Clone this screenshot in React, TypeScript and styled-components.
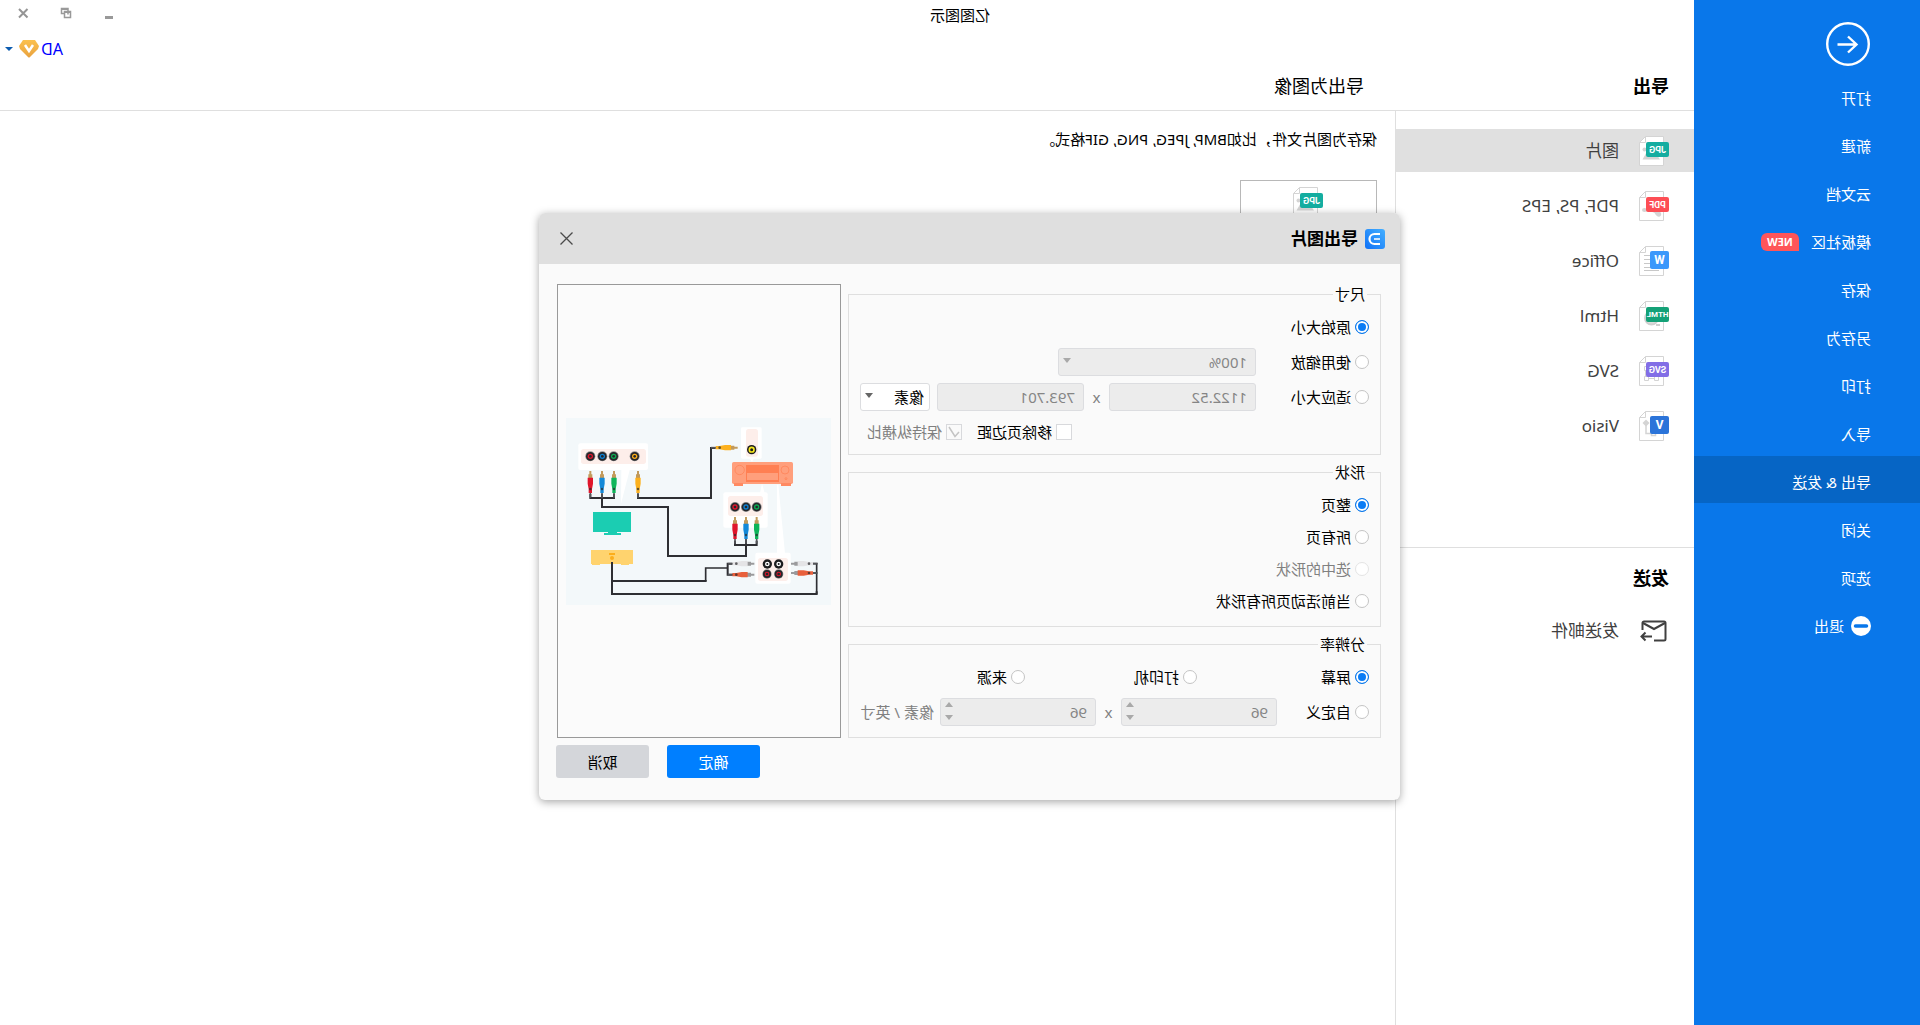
import React from "react";
import styled, { createGlobalStyle, css } from "styled-components";

const color = {
  brand: "#0977ea",
  brandActive: "#0665c5",
  line: "#dfdfdf",
  panel: "#fafafa",
  muted: "#808080",
  text: "#000000",
};

const GlobalStyle = createGlobalStyle`
  *, *::before, *::after { box-sizing: border-box; }
  body {
    margin: 0;
    background: #fff;
    overflow-x: hidden;
  }
  body, button, input, select {
    font-family: "Noto Sans", "Noto Sans CJK SC", sans-serif;
    font-size: 15px;
    line-height: 20px;
    color: ${color.text};
  }
  button { border: 0; padding: 0; background: none; cursor: pointer; }
  h1, h2, p, ul { margin: 0; padding: 0; font-weight: 400; }
  ul { list-style: none; }
  svg { display: block; flex: none; }
`;

/* The whole window is shown mirrored. */
const Window = styled.div`
  position: relative;
  display: flex;
  min-height: 100vh;
  background: #fff;
  transform: scaleX(-1);
`;

/* ---------- side menu ---------- */

const Side = styled.nav`
  flex: none;
  width: 226px;
  padding-top: 22px;
  background: ${color.brand};
`;

const BackButton = styled.button`
  display: block;
  margin: 0 0 6px 50px;
`;

const SideItem = styled.button<{ $active?: boolean }>`
  display: flex;
  align-items: center;
  width: 100%;
  height: 47px;
  margin-bottom: 1px;
  padding: 4px 0 0 49px;
  color: #fff;
  background: ${(p) => (p.$active ? color.brandActive : "transparent")};
`;

const NewBadge = styled.span`
  width: 38px;
  height: 18px;
  margin-left: 12px;
  border-radius: 6px 6px 6px 0;
  background: #ff5559;
  font-size: 11px;
  font-weight: 700;
  line-height: 18px;
  text-align: center;
`;

const ItemIcon = styled.span`
  margin-right: 7px;
`;

/* ---------- page frame ---------- */

const Content = styled.div`
  flex: 1;
  min-width: 0;
  display: flex;
  flex-direction: column;
`;

const TitleBar = styled.header`
  display: grid;
  grid-template-columns: 1fr 226px;
  height: 34px;
  align-items: center;
`;

const AppTitle = styled.h1`
  font-size: 15px;
  line-height: 20px;
  text-align: center;
  padding-bottom: 4px;
`;

const WindowButtons = styled.div`
  display: flex;
  justify-content: flex-end;
  padding: 0 2px 8px 0;
`;

const WindowButton = styled.button`
  display: flex;
  align-items: center;
  justify-content: center;
  width: 43px;
  height: 26px;
`;

const UserRow = styled.div`
  display: flex;
  justify-content: flex-end;
  align-items: center;
  gap: 2px;
  height: 29px;
  padding-right: 5px;
`;

const UserLink = styled.a`
  font-size: 16px;
  color: #0000ff;
  text-decoration: none;
`;

const CaretButton = styled.button`
  display: flex;
  align-items: center;
  padding-left: 4px;
  height: 20px;
`;

const Headings = styled.div`
  display: flex;
  align-items: center;
  height: 48px;
  padding-bottom: 2px;
  border-bottom: 1px solid ${color.line};
`;

const Columns = styled.div`
  flex: 1;
  display: flex;
`;

const SectionTitle = styled.h2`
  width: 299px;
  padding-left: 25px;
  font-size: 18px;
  font-weight: 700;
  line-height: 24px;
`;

const PageTitle = styled.h2`
  padding-left: 31px;
  font-size: 18px;
  line-height: 24px;
`;

/* ---------- format list ---------- */

const FormatColumn = styled.section`
  flex: none;
  width: 299px;
  padding-top: 18px;
  border-right: 1px solid ${color.line};
`;

const FormatList = styled.ul`
  display: flex;
  flex-direction: column;
  gap: 12px;
`;

const FormatRow = styled.button<{ $active?: boolean }>`
  display: flex;
  align-items: center;
  gap: 20px;
  width: 100%;
  height: 43px;
  padding-left: 25px;
  font-size: 17px;
  line-height: 24px;
  color: #404040;
  background: ${(p) => (p.$active ? "#e0e0e0" : "transparent")};
`;

const SendSection = styled.div`
  display: flex;
  flex-direction: column;
  gap: 19px;
  margin-top: 100px;
  padding-top: 18px;
  border-top: 1px solid ${color.line};
`;

/* ---------- export page ---------- */

const ExportPage = styled.main`
  flex: 1;
  display: flex;
  flex-direction: column;
  align-items: flex-start;
  gap: 31px;
  padding: 18px;
`;

const FormatCard = styled.button`
  display: flex;
  justify-content: center;
  width: 137px;
  height: 100px;
  padding-top: 6px;
  border: 1px solid #b8b8b8;
`;

/* ---------- dialog ---------- */

const Overlay = styled.div`
  position: absolute;
  inset: 0;
  display: flex;
  align-items: center;
  justify-content: center;
  padding: 0 19px 12px 0;
`;

const Dialog = styled.section`
  width: 861px;
  border-radius: 6px;
  background: ${color.panel};
  box-shadow: 0 2px 8px rgba(0, 0, 0, 0.35);
  overflow: hidden;
`;

const DialogHeader = styled.header`
  display: flex;
  align-items: center;
  gap: 7px;
  height: 51px;
  padding: 0 18px 0 15px;
  background: ${color.line};
`;

const DialogTitle = styled.h2`
  flex: 1;
  font-size: 17px;
  font-weight: 700;
  line-height: 24px;
`;

const CloseButton = styled.button`
  padding: 3px;
`;

const DialogBody = styled.form`
  padding: 20px 17px 22px 19px;
`;

const DialogColumns = styled.div`
  display: flex;
  gap: 7px;
`;

const Groups = styled.div`
  flex: 1;
  min-width: 0;
  display: flex;
  flex-direction: column;
  gap: 7px;
`;

const Group = styled.fieldset<{ $pad: string; $gap: number }>`
  min-width: 0;
  margin: 0;
  padding: ${(p) => p.$pad};
  border: 1px solid ${color.line};

  & > div + div {
    margin-top: ${(p) => p.$gap}px;
  }
`;

const Legend = styled.legend`
  margin-left: 2px;
  padding: 0 2px;
  line-height: 20px;
`;

const SizeRow = styled.div`
  display: grid;
  grid-template-columns: 113px 147px 25px 147px 7px 70px;
  align-items: center;
  height: 28px;
`;

const ChoiceRow = styled.div`
  display: flex;
  align-items: center;
  height: 32px;
`;

const CheckRow = styled.div`
  display: flex;
  align-items: center;
  justify-content: flex-end;
  gap: 15px;
  height: 28px;
  padding-right: 7px;
`;

const PresetRow = styled.div`
  display: grid;
  grid-template-columns: 172px 172px 1fr;
  align-items: center;
  height: 28px;
`;

const CustomRow = styled.div`
  display: grid;
  grid-template-columns: 92px 156px 25px 156px 6px 1fr;
  align-items: center;
  height: 28px;
`;

const Label = styled.label<{ $muted?: boolean }>`
  display: flex;
  align-items: center;
  gap: 4px;
  white-space: nowrap;
  color: ${(p) => (p.$muted ? color.muted : color.text)};
`;

const Unit = styled.span`
  color: ${color.muted};
  white-space: nowrap;
`;

const Times = styled(Unit)`
  text-align: center;
`;

const Radio = styled.input.attrs({ type: "radio" })`
  appearance: none;
  flex: none;
  width: 14px;
  height: 14px;
  margin: 0;
  border: 1px solid #c4c4c4;
  border-radius: 50%;
  background: #fff;

  &:checked {
    border-color: ${color.brand};
    background: #0a7cf5;
    box-shadow: inset 0 0 0 2px #fff;
  }
  &:disabled {
    border-color: #e4e4e4;
  }
`;

const CheckField = styled.span`
  position: relative;
  width: 16px;
  height: 16px;
`;

const Checkbox = styled.input.attrs({ type: "checkbox" })`
  appearance: none;
  display: block;
  width: 16px;
  height: 16px;
  margin: 0;
  border: 1px solid #d8d9dc;
  background: #fff;

  &:disabled {
    background: ${color.panel};
  }
`;

const Tick = styled.svg`
  position: absolute;
  inset: 0;
  pointer-events: none;
`;

const field = css`
  display: block;
  width: 100%;
  height: 28px;
  margin: 0;
  padding: 0 8px;
  border: 1px solid #dcdde0;
  border-radius: 3px;
  background: #fff;
  appearance: none;
  opacity: 1;

  &:disabled {
    color: #858585;
    background: #ececec;
  }
`;

const TextBox = styled.input`
  ${field}
`;

const NumberBox = styled.input.attrs({ type: "number" })`
  ${field}
  appearance: textfield;

  &::-webkit-inner-spin-button {
    appearance: none;
    margin: 0;
  }
`;

const SelectBox = styled.select`
  ${field}
  padding: 0 5px;
`;

const ScaleSelectBox = styled(SelectBox)`
  padding: 0 8px;
`;

const FieldWrap = styled.span<{ $wide?: boolean }>`
  position: relative;
  display: block;
  width: ${(p) => (p.$wide ? "198px" : "auto")};
`;

const FieldMark = styled.svg`
  position: absolute;
  top: 0;
  right: 4px;
  pointer-events: none;
`;

const Preview = styled.figure`
  flex: none;
  display: flex;
  align-items: center;
  justify-content: center;
  width: 284px;
  margin: 0 1px 0 0;
  border: 1px solid #999;
  background: #fbfbfb;
`;

const Actions = styled.div`
  display: flex;
  justify-content: flex-end;
  gap: 18px;
  margin-top: 7px;
`;

const ActionButton = styled.button<{ $primary?: boolean }>`
  width: 93px;
  height: 33px;
  border-radius: 3px;
  color: ${(p) => (p.$primary ? "#fff" : color.text)};
  background: ${(p) => (p.$primary ? "#007fff" : "#d4d6da")};
`;

/* ---------- icons ---------- */

type FileKind = "JPG" | "PDF" | "W" | "HTML" | "SVG" | "V";

const badgeColor: Record<FileKind, string> = {
  JPG: "#14ada0",
  PDF: "#fd4e55",
  W: "#3b98fb",
  HTML: "#14a177",
  SVG: "#826ee6",
  V: "#2b74d9",
};

const fileArt: Record<FileKind, React.ReactNode> = {
  JPG: (
    <g fill="#d4d4d4">
      <path d="M9 23.500l6-9 4 4 3-3 4.500 8z" />
      <circle cx="24.500" cy="13.500" r="2" />
    </g>
  ),
  PDF: (
    <g fill="#d4d4d4">
      <ellipse cx="11" cy="22.500" rx="3.500" ry="2.500" transform="rotate(-40 11 22.500)" />
      <ellipse cx="24.500" cy="19" rx="2.500" ry="2" />
      <path d="M12 20q8-2 12-2v2q-8 0-11 3z" />
    </g>
  ),
  W: (
    <g stroke="#c8c8c8">
      <path d="M18 9.500h7M18 13.500h7M18 17.500h7M18 21.500h7M10 24.500h15" />
    </g>
  ),
  HTML: (
    <g fill="none" stroke="#cfcfcf" strokeWidth="2">
      <circle cx="17.500" cy="17" r="6.500" fill="#dcdcdc" />
      <path d="M9 24h4" />
    </g>
  ),
  SVG: (
    <g fill="#fff" stroke="#d4d4d4">
      <path d="M12.500 12.500h11v10h-11z" />
      <path d="M10.500 20.500h4v4h-4zM20.500 20.500h4v4h-4zM20.500 10.500h4v4h-4z" />
    </g>
  ),
  V: (
    <g fill="none" stroke="#d4d4d4" strokeWidth="1.500">
      <path d="M23 13v9.500h-6" />
      <path d="M23 8.500l3.500 3.500-3.500 3.500-3.500-3.500z" fill="#d4d4d4" stroke="none" />
      <path d="M13.500 20.500h4v4h-4z" />
    </g>
  ),
};

function FileIcon({ kind }: { kind: FileKind }) {
  const single = kind.length === 1;
  const w = single ? 19 : 23;
  return (
    <svg width="30" height="30" viewBox="0 0 30 30" aria-hidden="true">
      <path d="M5.500 .5h18l6 6v23h-24z" fill="#fff" stroke="#d4d4d4" />
      <path d="M23.500 .5v6h6" fill="none" stroke="#d4d4d4" />
      {fileArt[kind]}
      <rect x="0" y={single ? 5 : 6} width={w} height={single ? 18 : 15} rx="2" fill={badgeColor[kind]} />
      <text
        x={w / 2}
        y={single ? 18 : kind === "HTML" ? 16 : 17}
        fill="#fff"
        fontFamily="Roboto, sans-serif"
        fontWeight="700"
        fontSize={single ? 12 : kind === "HTML" ? 8 : 9}
        textAnchor="middle"
      >
        {kind}
      </text>
    </svg>
  );
}

const BackIcon = () => (
  <svg width="44" height="44" viewBox="0 0 44 44" fill="none" stroke="#fff" strokeWidth="2.400" aria-hidden="true">
    <circle cx="22" cy="22" r="20.800" />
    <path d="M32.500 22.500H13.500M22 14.500l-8.500 8 8.500 8" />
  </svg>
);

const ExitIcon = () => (
  <svg width="20" height="20" viewBox="0 0 20 20" aria-hidden="true">
    <circle cx="10" cy="10" r="10" fill="#fff" />
    <path d="M4.500 10h11" stroke={color.brand} strokeWidth="3.500" strokeLinecap="round" />
  </svg>
);

const MailIcon = () => (
  <svg width="30" height="22" viewBox="0 0 30 22" fill="none" stroke="#404040" strokeWidth="2" aria-hidden="true">
    <path d="M15 20.500H5a1.500 1.500 0 0 1-1.500-1.500V3A1.500 1.500 0 0 1 5 1.500h20A1.500 1.500 0 0 1 26.500 3v7" />
    <path d="M4 3l11 6 11-6" />
    <path d="M17 16.500h10M23.500 12.500l4 4-4 4" />
  </svg>
);

const MinimizeIcon = () => (
  <svg width="12" height="12" viewBox="0 0 12 12" aria-hidden="true">
    <path d="M2 10.500h8" stroke="#999" strokeWidth="3" />
  </svg>
);

const RestoreIcon = () => (
  <svg width="12" height="12" viewBox="0 0 12 12" fill="none" stroke="#999" strokeWidth="1.500" aria-hidden="true">
    <path d="M4 7.500V1.500h6.500v5H8M1.500 4.500h6v6h-6z" />
    <path d="M4 2h7M1 5h7" strokeWidth="2" />
  </svg>
);

const CrossIcon = () => (
  <svg width="12" height="12" viewBox="0 0 12 12" aria-hidden="true">
    <path d="M1.500 2l8.500 8.500M10 2l-8.500 8.500" stroke="#959595" strokeWidth="2" />
  </svg>
);

const DialogCrossIcon = () => (
  <svg width="13" height="13" viewBox="0 0 13 13" aria-hidden="true">
    <path d="M.5 .5l12 12M12.500 .5l-12 12" stroke="#4a4a4a" strokeWidth="1.300" />
  </svg>
);

const VipIcon = () => (
  <svg width="20" height="18" viewBox="0 0 20 18" aria-hidden="true">
    <defs>
      <linearGradient id="vip" x1="0" y1="0" x2="0" y2="1">
        <stop offset="0" stopColor="#fbc14e" />
        <stop offset="1" stopColor="#e9a23f" />
      </linearGradient>
    </defs>
    <path d="M4 0h12l4 6-1 3-8 8q-1 1-2 0L1 9 0 6z" fill="url(#vip)" />
    <path d="M6 5l4 6 4-6" fill="none" stroke="#fff" strokeWidth="2.500" />
  </svg>
);

const LogoIcon = () => (
  <svg width="20" height="20" viewBox="0 0 20 20" aria-hidden="true">
    <defs>
      <linearGradient id="logo" x1="0" y1="0" x2="1" y2="1">
        <stop offset="0" stopColor="#45b0ff" />
        <stop offset="1" stopColor="#0f71f7" />
      </linearGradient>
    </defs>
    <rect width="20" height="20" rx="3" fill="url(#logo)" />
    <path d="M5 5h5.500a5 5 0 0 1 0 10H5" fill="none" stroke="#fff" strokeWidth="2.200" />
    <path d="M5 10h6" stroke="#cfe6ff" strokeWidth="2" />
  </svg>
);

const Caret = ({ fill }: { fill: string }) => (
  <FieldMark width="9" height="28" viewBox="0 0 9 28" aria-hidden="true">
    <path d="M0 10h8l-4 5z" fill={fill} />
  </FieldMark>
);

const Spinner = () => (
  <FieldMark width="9" height="28" viewBox="0 0 9 28" fill="#a9a9a9" aria-hidden="true">
    <path d="M0 9h8L4 4zM0 17h8l-4 5z" />
  </FieldMark>
);

/* ---------- wiring drawing ---------- */

function Jack({ x, y, fill, r = 15 }: { x: number; y: number; fill: string; r?: number }) {
  return (
    <g>
      <circle cx={x} cy={y} r={r} fill="#8c8c8c" />
      <circle cx={x} cy={y} r={r - 2} fill="#26262a" />
      <circle cx={x} cy={y} r={r - 7} fill={fill} />
      <circle cx={x} cy={y} r="4" fill="#26262a" />
    </g>
  );
}

function AudioJack({ x, y, fill }: { x: number; y: number; fill: string }) {
  return (
    <g>
      <circle cx={x} cy={y} r="14" fill="#1c1c1e" />
      <circle cx={x} cy={y} r="7" fill={fill} />
      <circle cx={x} cy={y} r="3" fill="#1c1c1e" />
    </g>
  );
}

function Plug({ x, y, fill, turn = 0, tip = "#c29a5b" }: { x: number; y: number; fill: string; turn?: number; tip?: string }) {
  return (
    <g transform={`translate(${x} ${y}) rotate(${turn})`}>
      <path d="M-3 0h6v10h3v14H-6V10h3z" fill={tip} />
      <path d="M-8 20H8v18l-3 16v12H-5V54l-3-16z" fill={fill} />
      <circle cx="0" cy="54" r="4" fill="#26262a" opacity=".7" />
      <path d="M-2.500 66h5v14h-5z" fill="#55565a" />
    </g>
  );
}

const Wiring = () => (
  <svg width="265" height="187" viewBox="18 24 795 561" role="img" aria-label="图片">
    <rect x="18" y="24" width="795" height="561" fill="#f3f8fa" />
    <g transform="translate(831 0) scale(-1 1)">
      <g fill="#fff">
        <path d="M184 176h26l-27 105z" />
        <path d="M600 250l6-30 8 30zM651 224h4l20 206h-24z" />
        <path d="M568 144h14l-6 12z" />
        <rect x="55" y="100" width="209" height="80" rx="6" />
        <rect x="543" y="52" width="62" height="94" rx="4" />
        <rect x="490" y="247" width="133" height="106" rx="6" />
        <rect x="586" y="428" width="106" height="93" rx="6" />
      </g>
      <g fill="#fdeeea">
        <rect x="63" y="117" width="195" height="45" rx="8" />
        <rect x="558" y="57" width="36" height="83" rx="8" />
        <rect x="504" y="258" width="105" height="60" rx="8" />
        <rect x="594" y="444" width="90" height="69" rx="8" />
      </g>
      <g fill="none" stroke="#2e2f33" strokeWidth="6">
        <path d="M91 252v12h71v-12M126 252v39h198v147h234v-50M525 392v13h65v-13" />
        <path d="M234 252v12h219V114h14" />
        <path d="M156 456v96h614v-8M156 513h284M519 461h-16v33h16" />
        <path d="M437 513v-39h66M770 552V461h-14M756 489h14" strokeWidth="5" />
      </g>
      <g>
        <rect x="516" y="156" width="183" height="66" rx="5" fill="#ff9f7c" />
        <path d="M522 219h27v9h-27zM663 219h30v9h-30z" fill="#ff8a62" />
        <path d="M558 165h99v51h-99z" fill="#ff7f52" />
        <path d="M561 189h93v21h-93z" fill="#ff9f7c" />
        <g fill="none" stroke="#ff7f52" strokeWidth="2">
          <circle cx="539" cy="180" r="14" />
          <circle cx="675" cy="180" r="12" />
          <circle cx="678" cy="206" r="3" />
        </g>
      </g>
      <path d="M99 306h114v60h-42v3h12v6h-51v-6h12v-3H99z" fill="#1bcdb2" />
      <path d="M93 420h126v42h-12v3h-24v-3h-63v3H96v-3h-3z" fill="#ffd36e" />
      <path d="M147 429h18v6h-18z" fill="#fcae1a" />
      <circle cx="156" cy="444" r="6" fill="#fcae1a" />
      <path d="M156 456v20" stroke="#2e2f33" strokeWidth="6" />
      <Jack x={91} y={139} fill="#e0162b" />
      <Jack x={127} y={139} fill="#0d7fd0" />
      <Jack x={161} y={139} fill="#0bab52" />
      <Jack x={224} y={139} fill="#fcae1a" />
      <Jack x={525} y={291} fill="#e0162b" />
      <Jack x={558} y={291} fill="#0d7fd0" />
      <Jack x={590} y={291} fill="#0bab52" />
      <circle cx="575" cy="119" r="14" fill="#1c1c1e" />
      <circle cx="575" cy="119" r="7" fill="none" stroke="#f6e71c" strokeWidth="5" />
      <AudioJack x={622} y={462} fill="#fff" />
      <AudioJack x={656} y={462} fill="#fff" />
      <Jack x={621} y={492} fill="#e0162b" r={14} />
      <Jack x={656} y={492} fill="#e0162b" r={14} />
      <Plug x={91} y={183} fill="#e0162b" />
      <Plug x={126} y={183} fill="#1389d8" />
      <Plug x={162} y={183} fill="#0fb55a" />
      <Plug x={234} y={183} fill="#fcb11e" />
      <Plug x={525} y={321} fill="#e0162b" />
      <Plug x={558} y={321} fill="#1389d8" />
      <Plug x={590} y={321} fill="#0fb55a" />
      <Plug x={533} y={113} fill="#fcb11e" turn={90} />
      <Plug x={583} y={461} fill="#e4e4e6" tip="#9a9a9c" turn={90} />
      <Plug x={583} y={494} fill="#e8603c" tip="#9a9a9c" turn={90} />
      <Plug x={693} y={461} fill="#e4e4e6" tip="#9a9a9c" turn={-90} />
      <Plug x={693} y={489} fill="#e8603c" tip="#9a9a9c" turn={-90} />
    </g>
  </svg>
);

/* ---------- data ---------- */

const menu = [
  "打开", "新建", "云文档", "模板社区", "保存", "另存为",
  "打印", "导入", "导出 & 发送", "关闭", "选项", "退出",
];

const formats: { kind: FileKind; label: string }[] = [
  { kind: "JPG", label: "图片" },
  { kind: "PDF", label: "PDF, PS, EPS" },
  { kind: "W", label: "Office" },
  { kind: "HTML", label: "Html" },
  { kind: "SVG", label: "SVG" },
  { kind: "V", label: "Visio" },
];

const shapes = [
  { label: "整页" },
  { label: "所有页" },
  { label: "选中的形状", disabled: true },
  { label: "当前活动页所有形状" },
];

function Option({ name, label, checked, disabled }: { name: string; label: string; checked?: boolean; disabled?: boolean }) {
  return (
    <Label $muted={disabled}>
      <Radio name={name} defaultChecked={checked} disabled={disabled} />
      {label}
    </Label>
  );
}

function ExportDialog() {
  return (
    <Dialog role="dialog" aria-labelledby="dialog-title">
      <DialogHeader>
        <LogoIcon />
        <DialogTitle id="dialog-title">导出图片</DialogTitle>
        <CloseButton type="button" aria-label="关闭">
          <DialogCrossIcon />
        </CloseButton>
      </DialogHeader>
      <DialogBody onSubmit={(e) => e.preventDefault()}>
        <DialogColumns>
          <Groups>
            <Group $pad="9px 11px 8px" $gap={7}>
              <Legend>尺寸</Legend>
              <SizeRow>
                <Option name="size" label="原始大小" checked />
              </SizeRow>
              <SizeRow>
                <Option name="size" label="使用缩放" />
                <FieldWrap $wide>
                  <ScaleSelectBox aria-label="使用缩放" disabled>
                    <option>100%</option>
                  </ScaleSelectBox>
                  <Caret fill="#a9a9a9" />
                </FieldWrap>
              </SizeRow>
              <SizeRow>
                <Option name="size" label="适应大小" />
                <TextBox aria-label="宽度" defaultValue="1122.52" disabled />
                <Times>x</Times>
                <TextBox aria-label="高度" defaultValue="793.701" disabled />
                <span />
                <FieldWrap>
                  <SelectBox aria-label="单位">
                    <option>像素</option>
                  </SelectBox>
                  <Caret fill="#666" />
                </FieldWrap>
              </SizeRow>
              <CheckRow>
                <Label>
                  <CheckField>
                    <Checkbox />
                  </CheckField>
                  移除页边距
                </Label>
                <Label $muted>
                  <CheckField>
                    <Checkbox defaultChecked disabled />
                    <Tick width="16" height="16" viewBox="0 0 16 16" aria-hidden="true">
                      <path d="M3 8l4 4.500L13 3" fill="none" stroke="#c4c4c4" strokeWidth="1.500" />
                    </Tick>
                  </CheckField>
                  保持纵横比
                </Label>
              </CheckRow>
            </Group>
            <Group $pad="7px 11px 9px" $gap={0}>
              <Legend>形状</Legend>
              {shapes.map((s, i) => (
                <ChoiceRow key={s.label}>
                  <Option name="shape" label={s.label} checked={i === 0} disabled={s.disabled} />
                </ChoiceRow>
              ))}
            </Group>
            <Group $pad="9px 11px 11px" $gap={7}>
              <Legend>分辨率</Legend>
              <PresetRow>
                <Option name="resolution" label="屏幕" checked />
                <Option name="resolution" label="打印机" />
                <Option name="resolution" label="来源" />
              </PresetRow>
              <CustomRow>
                <Option name="resolution" label="自定义" />
                <FieldWrap>
                  <NumberBox aria-label="水平分辨率" defaultValue={96} disabled />
                  <Spinner />
                </FieldWrap>
                <Times>x</Times>
                <FieldWrap>
                  <NumberBox aria-label="垂直分辨率" defaultValue={96} disabled />
                  <Spinner />
                </FieldWrap>
                <span />
                <Unit>像素 / 英寸</Unit>
              </CustomRow>
            </Group>
          </Groups>
          <Preview>
            <Wiring />
          </Preview>
        </DialogColumns>
        <Actions>
          <ActionButton type="submit" $primary>
            确定
          </ActionButton>
          <ActionButton type="button">取消</ActionButton>
        </Actions>
      </DialogBody>
    </Dialog>
  );
}

export default function App() {
  return (
    <>
      <GlobalStyle />
      <Window>
        <Side>
          <BackButton aria-label="返回">
            <BackIcon />
          </BackButton>
          <ul>
            {menu.map((label) => (
              <li key={label}>
                <SideItem $active={label === "导出 & 发送"}>
                  {label === "退出" && (
                    <ItemIcon>
                      <ExitIcon />
                    </ItemIcon>
                  )}
                  {label}
                  {label === "模板社区" && <NewBadge>NEW</NewBadge>}
                </SideItem>
              </li>
            ))}
          </ul>
        </Side>
        <Content>
          <TitleBar>
            <AppTitle>亿图图示</AppTitle>
            <WindowButtons>
              <WindowButton aria-label="最小化">
                <MinimizeIcon />
              </WindowButton>
              <WindowButton aria-label="还原">
                <RestoreIcon />
              </WindowButton>
              <WindowButton aria-label="关闭">
                <CrossIcon />
              </WindowButton>
            </WindowButtons>
          </TitleBar>
          <UserRow>
            <UserLink href="#account">AD</UserLink>
            <VipIcon />
            <CaretButton aria-label="账户">
              <svg width="8" height="6" viewBox="0 0 8 6" aria-hidden="true">
                <path d="M0 1h8L4 5z" fill="#0c5cb0" />
              </svg>
            </CaretButton>
          </UserRow>
          <Headings>
            <SectionTitle>导出</SectionTitle>
            <PageTitle>导出为图像</PageTitle>
          </Headings>
          <Columns>
            <FormatColumn>
              <FormatList>
                {formats.map((f, i) => (
                  <li key={f.kind}>
                    <FormatRow $active={i === 0}>
                      <FileIcon kind={f.kind} />
                      {f.label}
                    </FormatRow>
                  </li>
                ))}
              </FormatList>
              <SendSection>
                <SectionTitle>发送</SectionTitle>
                <FormatRow>
                  <MailIcon />
                  发送邮件
                </FormatRow>
              </SendSection>
            </FormatColumn>
            <ExportPage>
              <p>保存为图片文件，比如BMP, JPEG, PNG, GIF格式。</p>
              <FormatCard aria-label="图片">
                <FileIcon kind="JPG" />
              </FormatCard>
            </ExportPage>
          </Columns>
        </Content>
        <Overlay>
          <ExportDialog />
        </Overlay>
      </Window>
    </>
  );
}
